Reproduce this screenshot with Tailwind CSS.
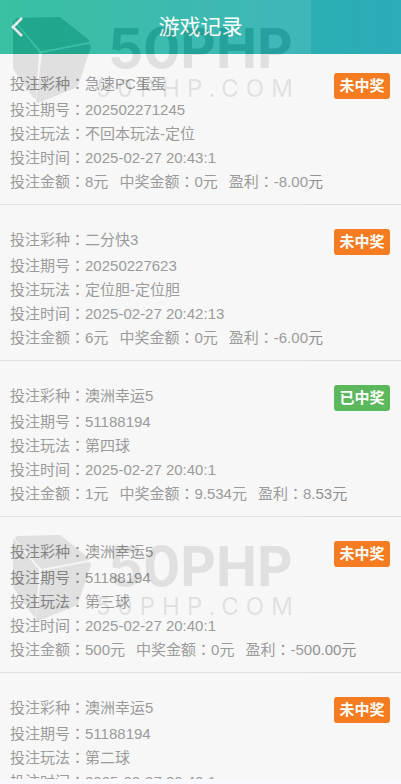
<!DOCTYPE html>
<html lang="zh-CN">
<head>
    <meta charset="UTF-8">
    <meta name="viewport" content="width=device-width, initial-scale=1.0">
    <title>游戏记录</title>
    <script src="https://cdn.jsdelivr.net/npm/@tailwindcss/browser@4"></script>
</head>
<body class="h-screen overflow-hidden bg-[#f8f8ff] pb-[5px] font-['Liberation_Sans','Noto_Sans_CJK_SC',sans-serif]">
    <!-- Header -->
    <header class="fixed inset-x-0 top-0 z-10 flex h-[54px] items-center justify-center bg-linear-to-r from-[#24b998] to-[#2cabb9]">
        <button type="button" aria-label="返回" class="absolute left-2 flex h-10 w-6 items-center text-white">
            <svg class="h-5 w-4" viewBox="0 0 16 20" fill="none" stroke="currentColor" stroke-width="2.5">
                <path d="M14 1L5 10l9 9"></path>
            </svg>
        </button>
        <h1 class="text-[21px] text-white">游戏记录</h1>
    </header>

    <!-- Records -->
    <main class="h-full overflow-hidden bg-[#f7f7f7] pt-[49px] text-[15px] leading-6 text-[#909090]">
        <ul id="records"></ul>
    </main>

    <!-- Watermark, repeats down the page -->
    <svg class="pointer-events-none fixed left-0 top-0 z-20 h-full w-[311px]" aria-hidden="true">
        <defs>
            <g id="mark">
                <path d="M17 18l43-1 29 23v2L42 51q-1 0-2-1L15 21q0-2 2-3z"></path>
                <path d="M13 20l26 32-3 47q-2 0-4-3L15 72q-2-3-2-5z"></path>
                <path d="M42 53l46-9q3 0 3 3L79 83q-1 3-4 5l-37 15q-2 0-2-2z"></path>
                <text x="108" y="68" font-size="55" class="font-['Inter',sans-serif] font-bold">50PHP</text>
                <text x="96" y="97" font-size="24" class="font-['Inter',sans-serif] font-normal tracking-[7px]">50PHP.COM</text>
            </g>
            <mask id="around">
                <rect width="311" height="518" fill="#fff"></rect>
                <use href="#mark" fill="#000"></use>
            </mask>
            <pattern id="tile" width="311" height="518" patternUnits="userSpaceOnUse">
                <rect width="311" height="518" fill="#fff" fill-opacity="0.1" mask="url(#around)"></rect>
                <use href="#mark" fill="#000" fill-opacity="0.09"></use>
            </pattern>
        </defs>
        <rect width="100%" height="100%" fill="url(#tile)"></rect>
    </svg>

    <script>
        const records = [
            { game: '急速PC蛋蛋', issue: '202502271245', play: '不回本玩法-定位', time: '2025-02-27 20:43:1', bet: '8', win: '0', profit: '-8.00' },
            { game: '二分快3', issue: '20250227623', play: '定位胆-定位胆', time: '2025-02-27 20:42:13', bet: '6', win: '0', profit: '-6.00' },
            { game: '澳洲幸运5', issue: '51188194', play: '第四球', time: '2025-02-27 20:40:1', bet: '1', win: '9.534', profit: '8.53', won: true },
            { game: '澳洲幸运5', issue: '51188194', play: '第三球', time: '2025-02-27 20:40:1', bet: '500', win: '0', profit: '-500.00' },
            { game: '澳洲幸运5', issue: '51188194', play: '第二球', time: '2025-02-27 20:40:1', bet: '500', win: '0', profit: '-500.00' },
        ];

        // the colon sits in the middle of its cell in the TC face
        const field = (label, value) =>
            `<span>${label}<span class="font-['Noto_Sans_CJK_TC',sans-serif]" lang="zh-TW">：</span>${value}</span>`;

        document.getElementById('records').innerHTML = records.map(r => `
            <li class="relative border-b border-[#dcdcdc] px-[10px] pt-[22px] pb-[11px]">
                <p class="mb-[2px] h-6">${field('投注彩种', r.game)}</p>
                <p class="h-6">${field('投注期号', r.issue)}</p>
                <p class="h-6">${field('投注玩法', r.play)}</p>
                <p class="h-6">${field('投注时间', r.time)}</p>
                <p class="flex h-6 gap-[11px]">${field('投注金额', r.bet + '元')}${field('中奖金额', r.win + '元')}${field('盈利', r.profit + '元')}</p>
                <span class="absolute right-[11px] top-6 w-14 rounded-[3px] text-center leading-[26px] font-bold text-white ${r.won ? 'bg-[#5cb85c]' : 'bg-[#f57c20]'}">${r.won ? '已中奖' : '未中奖'}</span>
            </li>`).join('');
    </script>
</body>
</html>
